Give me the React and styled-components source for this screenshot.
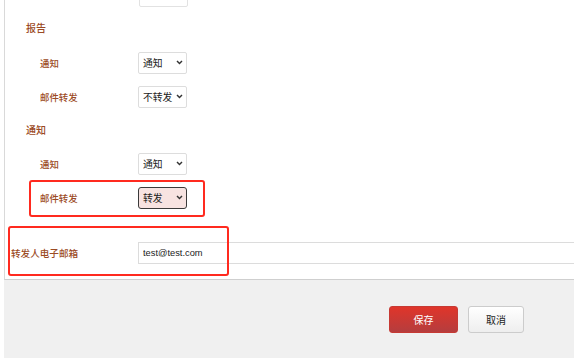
import React from "react";
import styled, { createGlobalStyle, css } from "styled-components";

const GlobalStyle = createGlobalStyle`
  html, body {
    margin: 0;
    padding: 0;
    background: #ffffff;
  }
  body {
    font-family: "Liberation Sans", "Noto Sans CJK SC", sans-serif;
    font-size: 10px;
  }
`;

const Page = styled.div`
  height: 358px;
  overflow: hidden;
  background: #f0f0f0;
  border-left: 4px solid #ffffff;
`;

const Panel = styled.section`
  background: #ffffff;
  border-left: 1px solid #d9d9d9;
  border-bottom: 1px solid #cfcfcf;
  padding-bottom: 9px;
`;

const Stub = styled.div`
  margin-top: -15px;
  padding-left: 134px;
  height: 22px;
`;

const StubBox = styled.div`
  box-sizing: border-box;
  width: 49px;
  height: 22px;
  border: 1px solid #e2e2e2;
  border-radius: 2px;
`;

const SectionTitle = styled.h4`
  margin: ${(p) => p.$top}px 0 ${(p) => p.$bottom}px 0;
  padding-left: 21px;
  line-height: 14px;
  font-size: 10px;
  font-weight: 500;
  color: #9b4a24;
  font-family: "Noto Sans CJK SC", sans-serif;
`;

const Row = styled.div`
  position: relative;
  display: grid;
  grid-template-columns: ${(p) => (p.$wide ? "127px 1fr" : "98px 1fr")};
  align-items: center;
  height: 34px;
  padding-left: ${(p) => (p.$wide ? "6px" : "35px")};
  margin-top: ${(p) => p.$top || 0}px;
`;

const Label = styled.label`
  color: #9b4a24;
  font-family: "Noto Sans CJK SC", sans-serif;
  font-size: ${(p) => (p.$big ? "9.6px" : "9.4px")};
  font-weight: 500;
  line-height: 14px;
`;

const SelectWrap = styled.div`
  position: relative;
  width: 49px;
  height: 22px;
`;

const Select = styled.select`
  appearance: none;
  box-sizing: border-box;
  width: 100%;
  height: 100%;
  margin: 0;
  padding: 0 0 0 4px;
  font-family: "Noto Sans CJK SC", sans-serif;
  font-size: 9.8px;
  color: #222;
  background: #ffffff;
  border: 1px solid #dddddd;
  border-radius: 2px;
  outline: none;
  ${(p) =>
    p.$active &&
    css`
      background: #f7e3e1;
      border: 1px solid #3a3a3a;
      border-radius: 3px;
    `}
`;

const Chevron = styled.svg`
  position: absolute;
  right: 4px;
  top: 8px;
  width: 7px;
  height: 5px;
  pointer-events: none;
`;

const EmailInput = styled.input`
  box-sizing: border-box;
  width: calc(100% + 10px);
  height: 22px;
  margin: 0;
  padding: 0 4px;
  border: 1px solid #dcdcdc;
  border-right: none;
  font-family: "Liberation Sans", sans-serif;
  font-size: 9.3px;
  color: #222;
  outline: none;
`;

const Highlight = styled.div`
  position: absolute;
  left: ${(p) => p.$left}px;
  top: ${(p) => p.$top}px;
  width: ${(p) => p.$width}px;
  height: ${(p) => p.$height}px;
  box-sizing: border-box;
  border: 2px solid #ff2a1f;
  border-radius: 3px;
  pointer-events: none;
`;

const Footer = styled.div`
  display: flex;
  justify-content: flex-end;
  gap: 10px;
  padding: 26px 50px 0 0;
`;

const Button = styled.button`
  box-sizing: border-box;
  height: 27px;
  width: ${(p) => (p.$primary ? "69px" : "56px")};
  border-radius: 3px;
  font-family: "Noto Sans CJK SC", sans-serif;
  font-size: 10px;
  cursor: pointer;
  ${(p) =>
    p.$primary
      ? css`
          color: #ffffff;
          border: 1px solid #c63a34;
          background: linear-gradient(#e0352a, #b53d3e);
        `
      : css`
          color: #222;
          border: 1px solid #cccccc;
          background: linear-gradient(#ffffff, #eeeeee);
        `}
`;

function Dropdown({ value, options, active }) {
  return (
    <SelectWrap>
      <Select defaultValue={value} $active={active}>
        {options.map((o) => (
          <option key={o}>{o}</option>
        ))}
      </Select>
      <Chevron viewBox="0 0 7 5">
        <path d="M1 1 L3.5 3.6 L6 1" fill="none" stroke="#333" strokeWidth="1.4" />
      </Chevron>
    </SelectWrap>
  );
}

export default function App() {
  return (
    <>
      <GlobalStyle />
      <Page>
        <Panel>
          <Stub>
            <StubBox />
          </Stub>

          <SectionTitle $top={14} $bottom={11}>报告</SectionTitle>
          <Row>
            <Label>通知</Label>
            <Dropdown value="通知" options={["通知", "不通知"]} />
          </Row>
          <Row>
            <Label>邮件转发</Label>
            <Dropdown value="不转发" options={["转发", "不转发"]} />
          </Row>

          <SectionTitle $top={9} $bottom={10}>通知</SectionTitle>
          <Row>
            <Label>通知</Label>
            <Dropdown value="通知" options={["通知", "不通知"]} />
          </Row>
          <Row>
            <Label>邮件转发</Label>
            <Dropdown value="转发" options={["转发", "不转发"]} active />
            <Highlight $left={24} $top={-1} $width={176} $height={37} />
          </Row>

          <Row $wide $top={21}>
            <Label $big>转发人电子邮箱</Label>
            <EmailInput defaultValue="test@test.com" />
            <Highlight $left={3} $top={-10} $width={221} $height={50} />
          </Row>
        </Panel>

        <Footer>
          <Button $primary>保存</Button>
          <Button>取消</Button>
        </Footer>
      </Page>
    </>
  );
}
